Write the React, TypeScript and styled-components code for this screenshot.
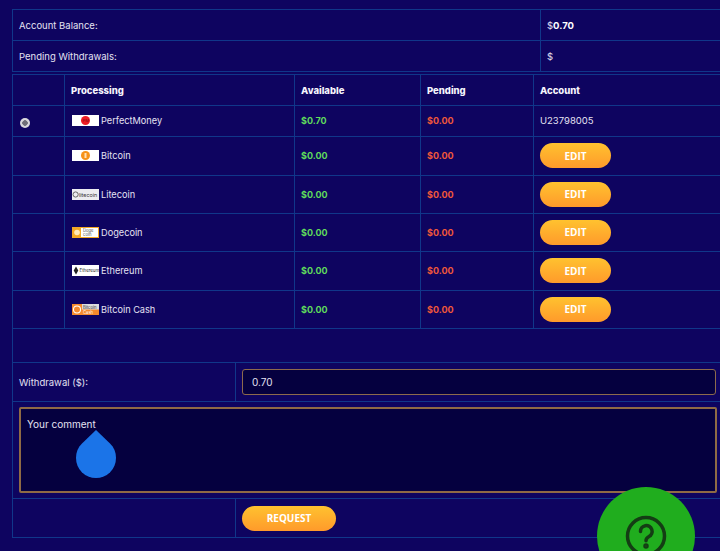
import React from "react";
import styled, { createGlobalStyle } from "styled-components";

const Global = createGlobalStyle`
  html, body { margin: 0; padding: 0; background: #0e0460; height: 551px; overflow: hidden; }
  * { box-sizing: border-box; }
`;

const Page = styled.main`
  position: relative;
  width: 720px;
  height: 551px;
  overflow: hidden;
  padding: 9px 0 0 12px;
  font-family: Inter, "Noto Sans", sans-serif;
  font-size: 9.5px;
  color: #e4e2f2;
`;

const Grid = styled.table<{ $gap?: number }>`
  width: 711px;
  table-layout: fixed;
  border-collapse: collapse;
  margin-top: ${(p) => p.$gap ?? 0}px;
  border: 1px solid #10378a;
`;

const Row = styled.tr<{ $h: number }>`
  height: ${(p) => p.$h}px;
`;

const Cell = styled.td<{ $lift?: boolean }>`
  border: 1px solid #10378a;
  padding: 0 6px ${(p) => (p.$lift ? 1 : 0)}px;
  vertical-align: middle;
  white-space: nowrap;
`;

const HeadCell = styled.th`
  border: 1px solid #10378a;
  padding: 0 6px;
  text-align: left;
  font-size: 9.5px;
  font-weight: 800;
  color: #f6f5fc;
`;

const Money = styled.span<{ $tone: "green" | "red" }>`
  font-size: 9px;
  font-weight: 700;
  color: ${(p) => (p.$tone === "green" ? "#5fdc5c" : "#f0583a")};
`;

const Strong = styled.b`
  color: #fff;
  font-weight: 700;
`;

const Radio = styled.span`
  display: block;
  width: 10px;
  height: 10px;
  margin: 3px 0 0 1px;
  border-radius: 50%;
  background: radial-gradient(circle, #6f6f78 0 2.5px, #d8d8dc 3px);
`;

const Method = styled.div`
  display: flex;
  align-items: center;
  gap: 2px;
  font-size: 9.2px;
`;

const Logo = styled.svg`
  display: block;
  flex: none;
  width: 27px;
  height: 11px;
  margin-left: 1px;
`;

const Pill = styled.button<{ $w: number }>`
  display: block;
  width: ${(p) => p.$w}px;
  height: 25px;
  border: 0;
  border-radius: 13px;
  padding: 0;
  background: linear-gradient(180deg, #ffc22f, #ff9a2b);
  color: #fff;
  font: 700 10px "Open Sans", sans-serif;
`;

const Field = styled.div`
  height: 26px;
  border: 1px solid #8d6a4c;
  border-radius: 3px;
  background: #05003f;
  padding: 0 9px;
  display: flex;
  align-items: center;
  font-size: 10px;
`;

const Comment = styled.div`
  height: 86px;
  width: 698px;
  border: 2px solid #8f6a45;
  border-radius: 2px;
  background: #05003f;
  padding: 9px 6px;
  font-size: 10px;
`;

const Drop = styled.svg`
  position: absolute;
  left: 76px;
  top: 430px;
  width: 40px;
  height: 48px;
`;

const HelpBubble = styled.div`
  position: absolute;
  left: 597px;
  top: 487px;
  width: 98px;
  height: 98px;
  border-radius: 50%;
  background: #20ad1e;
  display: flex;
  justify-content: center;
  padding-top: 28px;
`;

const HelpIcon = styled.svg`
  width: 42px;
  height: 42px;
`;

type Coin = { name: string; available: string; logo: React.ReactNode };

const tiny = { fontFamily: "Inter, sans-serif", fontSize: 4.5 };

const coins: Coin[] = [
  {
    name: "Bitcoin",
    available: "$0.00",
    logo: (
      <>
        <rect width="27" height="11" fill="#fff" />
        <circle cx="13.5" cy="5.5" r="4.5" fill="#f7931a" />
        <rect x="12.5" y="3" width="2" height="5" fill="#ffe2b8" />
      </>
    ),
  },
  {
    name: "Litecoin",
    available: "$0.00",
    logo: (
      <>
        <rect width="27" height="11" fill="#ececf0" />
        <circle cx="3.6" cy="5.5" r="2.6" fill="none" stroke="#666" />
        <text x="7" y="7.6" fill="#333" style={{ ...tiny, fontSize: 5.4 }}>
          litecoin
        </text>
      </>
    ),
  },
  {
    name: "Dogecoin",
    available: "$0.00",
    logo: (
      <>
        <rect width="27" height="11" fill="#f3a826" />
        <rect x="1" y="1" width="25" height="9" fill="#fff" />
        <rect x="1" y="1" width="8" height="9" fill="#f3a826" />
        <circle cx="5" cy="5.5" r="2.8" fill="#ffe9b8" />
        <text x="11" y="5" fill="#555" style={{ ...tiny, fontSize: 4.2 }}>
          Doge
        </text>
        <text x="11" y="9.4" fill="#555" style={{ ...tiny, fontSize: 4.2 }}>
          coin
        </text>
      </>
    ),
  },
  {
    name: "Ethereum",
    available: "$0.00",
    logo: (
      <>
        <rect width="27" height="11" fill="#fff" />
        <path d="M4 1.500 6.300 5.600 4 9.500 1.700 5.600z" fill="#222" />
        <text x="7.500" y="7.200" fill="#222" style={{ ...tiny, fontSize: 4.4 }}>
          Ethereum
        </text>
      </>
    ),
  },
  {
    name: "Bitcoin Cash",
    available: "$0.00",
    logo: (
      <>
        <rect width="27" height="11" fill="#f58a2c" />
        <rect x="10" y="0" width="17" height="5.500" fill="#ddd" />
        <circle cx="5" cy="5.500" r="4" fill="#fff" />
        <circle cx="5" cy="5.500" r="3" fill="#f58a2c" />
        <text x="11" y="4.600" fill="#333" style={{ ...tiny, fontSize: 4.2 }}>
          Bitcoin
        </text>
        <text x="11" y="9.800" fill="#fff" style={{ ...tiny, fontSize: 4.2 }}>
          Cash
        </text>
      </>
    ),
  },
];

const heights = [39, 38, 38, 39, 38];

export default function App() {
  return (
    <Page>
      <Global />
      <Grid>
        <colgroup>
          <col width={528} />
          <col />
        </colgroup>
        <tbody>
          <Row $h={31}>
            <Cell>Account Balance:</Cell>
            <Cell>
              $<Strong>0.70</Strong>
            </Cell>
          </Row>
          <Row $h={31}>
            <Cell>Pending Withdrawals:</Cell>
            <Cell>$</Cell>
          </Row>
        </tbody>
      </Grid>
      <Grid $gap={2}>
        <colgroup>
          <col width={52} />
          <col width={230} />
          <col width={126} />
          <col width={113} />
          <col />
        </colgroup>
        <tbody>
          <Row $h={31}>
            <HeadCell />
            <HeadCell>Processing</HeadCell>
            <HeadCell>Available</HeadCell>
            <HeadCell>Pending</HeadCell>
            <HeadCell>Account</HeadCell>
          </Row>
          <Row $h={31}>
            <Cell>
              <Radio />
            </Cell>
            <Cell $lift>
              <Method>
                <Logo viewBox="0 0 27 11">
                  <rect width="27" height="11" fill="#fff" />
                  <circle cx="13.500" cy="5.500" r="4.500" fill="#ee1c25" />
                  <text x="10.600" y="7.200" fill="#7c1016" style={{ ...tiny, fontSize: 4 }}>
                    PM
                  </text>
                </Logo>
                PerfectMoney
              </Method>
            </Cell>
            <Cell $lift>
              <Money $tone="green">$0.70</Money>
            </Cell>
            <Cell $lift>
              <Money $tone="red">$0.00</Money>
            </Cell>
            <Cell $lift>U23798005</Cell>
          </Row>
          {coins.map((c, i) => (
            <Row $h={heights[i]} key={c.name}>
              <Cell />
              <Cell $lift>
                <Method>
                  <Logo viewBox="0 0 27 11">{c.logo}</Logo>
                  {c.name}
                </Method>
              </Cell>
              <Cell $lift>
                <Money $tone="green">{c.available}</Money>
              </Cell>
              <Cell $lift>
                <Money $tone="red">$0.00</Money>
              </Cell>
              <Cell $lift>
                <Pill $w={71}>EDIT</Pill>
              </Cell>
            </Row>
          ))}
        </tbody>
      </Grid>
      <Grid $gap={-1}>
        <colgroup>
          <col width={223} />
          <col />
        </colgroup>
        <tbody>
          <Row $h={34}>
            <Cell colSpan={2} />
          </Row>
          <Row $h={39}>
            <Cell>Withdrawal ($):</Cell>
            <Cell>
              <Field>0.70</Field>
            </Cell>
          </Row>
          <Row $h={97}>
            <Cell colSpan={2}>
              <Comment>Your comment</Comment>
            </Cell>
          </Row>
          <Row $h={39}>
            <Cell />
            <Cell>
              <Pill $w={94}>REQUEST</Pill>
            </Cell>
          </Row>
        </tbody>
      </Grid>
      <Drop viewBox="0 0 40 48">
        <path d="M20 0 34 13.500C38 17.500 40 22 40 28A20 20 0 0 1 0 28C0 22 2 17.500 6 13.500Z" fill="#1b74e8" />
      </Drop>
      <HelpBubble>
        <HelpIcon viewBox="0 0 42 42" fill="none" stroke="#143d14" strokeWidth="3.500" strokeLinecap="round">
          <circle cx="21" cy="21" r="18.500" />
          <path d="M15.500 16.500a5.800 5.800 0 1 1 8.500 5c-2 1.100-3 2.200-3 4.300" />
          <circle cx="21" cy="31" r="1" fill="#143d14" />
        </HelpIcon>
      </HelpBubble>
    </Page>
  );
}
